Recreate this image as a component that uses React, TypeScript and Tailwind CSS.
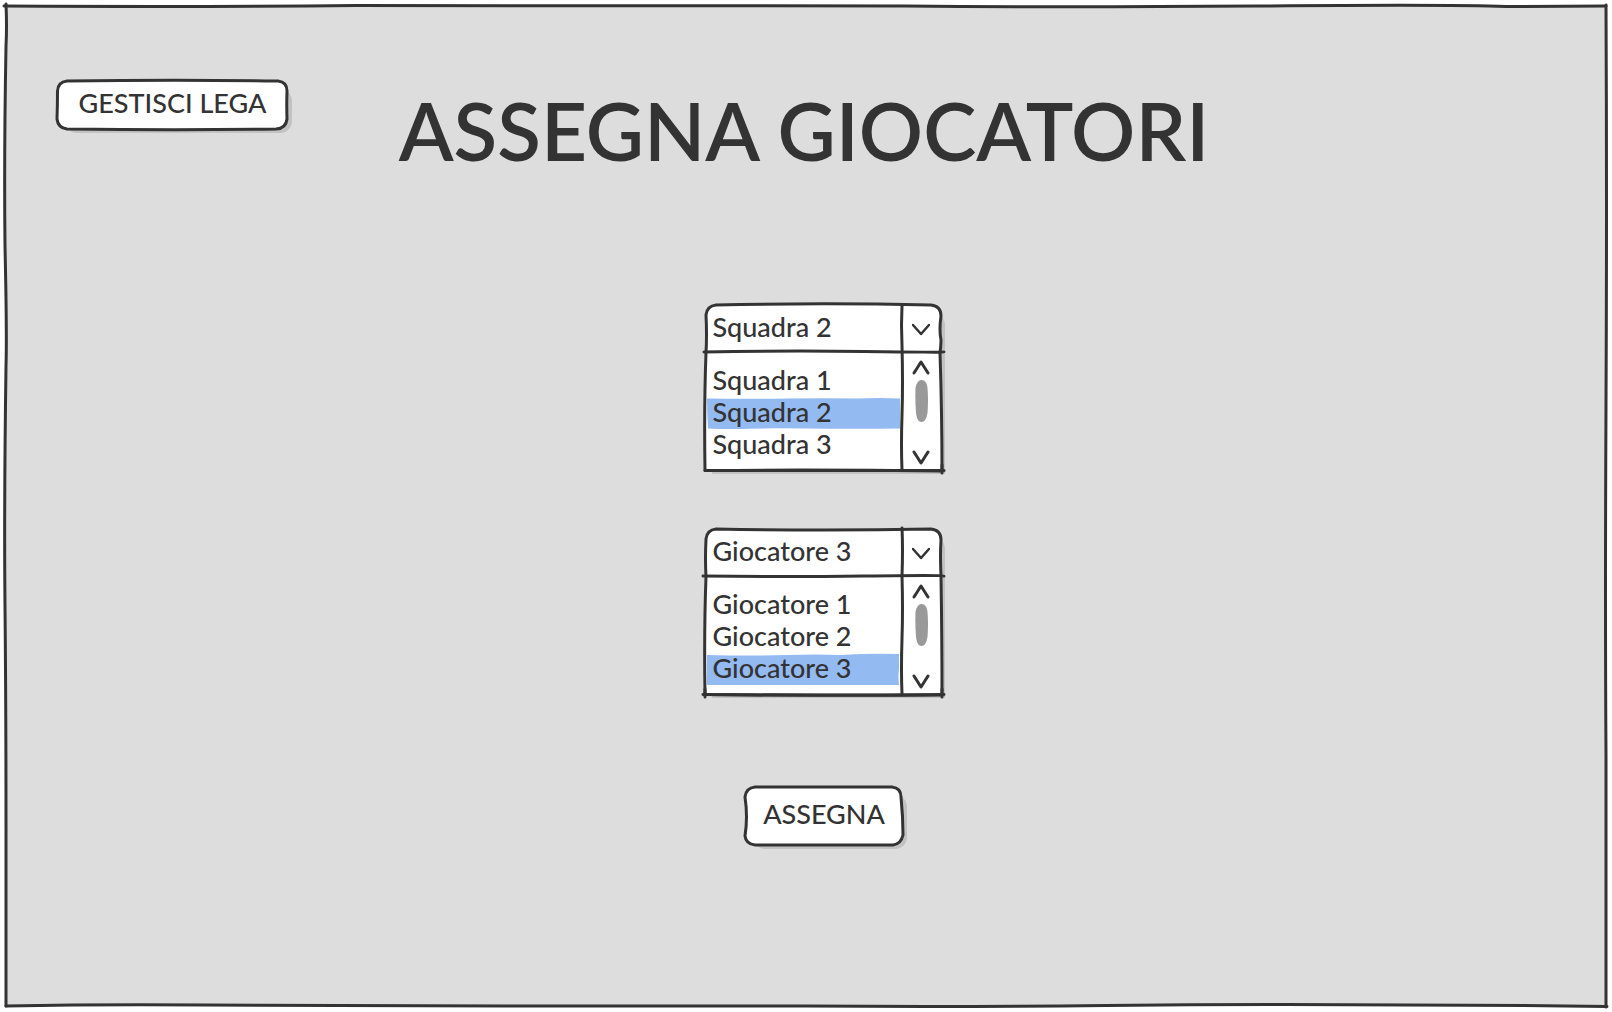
import { useState } from "react";

type OutlineProps = { viewBox: string; paths: string[]; fill?: string };

/* Hand-drawn outline stretched behind the box that contains it. */
function Outline({ viewBox, paths, fill = "none" }: OutlineProps) {
  return (
    <svg
      aria-hidden="true"
      viewBox={viewBox}
      preserveAspectRatio="none"
      className="pointer-events-none absolute inset-0 h-full w-full overflow-visible"
    >
      {paths.map((d, i) => (
        <path
          key={d}
          d={d}
          fill={i === 0 ? fill : "none"}
          stroke="#333333"
          strokeWidth="3"
          strokeLinecap="round"
          strokeLinejoin="round"
          vectorEffect="non-scaling-stroke"
        />
      ))}
    </svg>
  );
}

function Chevron({ up = false, wide = false }: { up?: boolean; wide?: boolean }) {
  const d = up ? "M2 13L9 2L16 13" : wide ? "M1 3L9 12L17 3" : "M2 2L9 13L16 2";
  return (
    <svg aria-hidden="true" viewBox="0 0 18 15" className="h-[15px] w-[18px]">
      <path d={d} fill="none" stroke="#333333" strokeWidth={wide ? 2.5 : 3} strokeLinecap="round" strokeLinejoin="round" />
    </svg>
  );
}

const highlights = [
  "M0 0.5Q40 1 80 0.5T150 0.5Q175 -0.5 194 0.5V30.5Q150 31 100 30.5T31 31Q10 31 1 30.5Q0 15 0 0.5Z",
  "M0 1Q40 2 80 1Q110 0 135 1Q165 -1 193 0V14Q192 24 193 31H0Z",
];

type ComboProps = {
  label: string;
  options: string[];
  initial: string;
  lines: string[];
  highlight: string;
};

function Combo({ label, options, initial, lines, highlight }: ComboProps) {
  const [value, setValue] = useState(initial);
  return (
    <div className="relative h-[166px] w-[237px]">
      <div className="absolute -bottom-[3px] -right-1 left-2 top-2 rounded-tr-xl bg-[#c2c2c2]" />
      <Outline viewBox="0 0 237 166" fill="#ffffff" paths={lines} />
      <div className="relative grid h-full grid-cols-[198px_1fr] grid-rows-[47px_1fr]">
        <select
          aria-label={label}
          value={value}
          onChange={(e) => setValue(e.target.value)}
          className="h-11 w-full appearance-none bg-transparent pl-[9px] outline-none"
        >
          {options.map((o) => (
            <option key={o}>{o}</option>
          ))}
        </select>
        <span className="flex items-center justify-center pt-0.5">
          <Chevron wide />
        </span>
        <ul role="listbox" aria-label={label} className="pt-3">
          {options.map((o) => (
            <li key={o} role="option" aria-selected={o === value} className="relative h-8">
              {o === value && (
                <svg
                  aria-hidden="true"
                  viewBox="0 0 194 31"
                  preserveAspectRatio="none"
                  className="absolute left-[3px] top-0.5 h-[31px] w-[193px] overflow-visible"
                >
                  <path d={highlight} fill="#94baf2" />
                </svg>
              )}
              <button type="button" onClick={() => setValue(o)} className="relative block h-8 w-full pl-[9px] text-left leading-7">
                {o}
              </button>
            </li>
          ))}
        </ul>
        <div className="flex flex-col items-center pb-1.5 pt-2">
          <Chevron up />
          <svg aria-hidden="true" viewBox="0 0 13 42" className="mt-[5px] h-[42px] w-[13px]">
            <path d="M6.5 0C10 0 12 3 12.5 8Q13.5 20 12.5 33Q11 42 6.5 42Q2 42 1 33Q0 20 0.5 8Q2 0 6.5 0Z" fill="#999999" />
          </svg>
          <span className="mt-auto flex">
            <Chevron />
          </span>
        </div>
      </div>
    </div>
  );
}

export default function App() {
  return (
    <div className="flex min-h-screen bg-white p-1.5 font-['Lato',sans-serif] text-[27px] font-medium leading-8 text-[#333333]">
      <div className="relative flex flex-1 flex-col bg-[#dddddd]">
        <Outline
          viewBox="0 0 1600 1000"
          paths={[
            "M-2 0Q200 1 350 -0.5Q650 -1 900 0Q1050 1.5 1250 0T1500 0.5L1600 0",
            "M0 -2Q1 20 0 40Q-2 150 -1 240Q1 330 0 360Q-2 500 -1 600T0 820V1000",
            "M1600 -1Q1601 200 1600 400Q1599 600 1600 750Q1600 880 1600 1001",
            "M0 1000Q100 998 200 999T500 1000T800 1000Q950 1001 1100 999.5T1400 999Q1500 999 1601 1000.5",
          ]}
        />
        <header className="relative grid grid-cols-[1fr_auto_1fr] items-start px-[51px] pt-[75px]">
          <button type="button" className="relative h-12 w-[231px] justify-self-start">
            <span className="absolute -bottom-1 -right-1 left-2 top-2 rounded-xl bg-[#c2c2c2]" />
            <Outline
              viewBox="0 0 231 48"
              fill="#ffffff"
              paths={["M10 0Q120 -1.5 221 0Q230 1 230 10Q229.5 24 230 38Q229 47.5 219 48Q120 49.5 10 48Q1 47 0 38Q0.5 24 0.5 10Q1 1 10 0Z"]}
            />
            <span className="relative block pb-1">GESTISCI LEGA</span>
          </button>
          <h1 className="pr-1 pt-[5px] text-[80px] font-semibold leading-[88px]">ASSEGNA GIOCATORI</h1>
        </header>
        <main className="relative flex flex-1 flex-col items-center pl-8 pt-[131px]">
          <Combo
            label="Squadra"
            options={["Squadra 1", "Squadra 2", "Squadra 3"]}
            initial="Squadra 2"
            highlight={highlights[0]}
            lines={[
              "M2 48Q3 30 2 10Q3 1 12 0Q120 -2.5 227 0Q237 1 237 11Q235 25 237 35Q237 40 236 48Q238 110 238 166Q120 164.5 1 165.5Q0 100 2 48Z",
              "M0 47Q80 45.5 160 46.5T240 47",
              "M198 1Q197 20 198 40Q199 80 198 110T198 165",
              "M1 165.5H240",
              "M238 160V168",
            ]}
          />
          <div className="mb-[92px] mt-[58px]">
            <Combo
              label="Giocatore"
              options={["Giocatore 1", "Giocatore 2", "Giocatore 3"]}
              initial="Giocatore 3"
              highlight={highlights[1]}
              lines={[
                "M2 48Q1 30 2 10Q3 1 12 0Q120 2 227 0Q237 1 237 11Q236 25 237 48Q238 110 238 166Q120 166.5 1 165.5Q0 100 2 48Z",
                "M-1 47Q80 48 160 47T240 47",
                "M198 -1Q199 20 198 47Q199 80 198 110T198 165",
                "M-1 165.5Q120 166.5 240 165.5",
                "M1 160V168",
                "M238 160V168",
              ]}
            />
          </div>
          <button type="button" className="relative ml-1 h-[58px] w-[158px]">
            <span className="absolute -bottom-1 -right-1 left-2 top-2 rounded-xl bg-[#c2c2c2]" />
            <Outline
              viewBox="0 0 158 58"
              fill="#ffffff"
              paths={["M10 0H147Q156 1 156 10Q158 30 158 48Q156 57 148 58H10Q1 57 0 49Q3 30 0 10Q1 1 10 0Z"]}
            />
            <span className="relative block pb-1">ASSEGNA</span>
          </button>
        </main>
      </div>
    </div>
  );
}
